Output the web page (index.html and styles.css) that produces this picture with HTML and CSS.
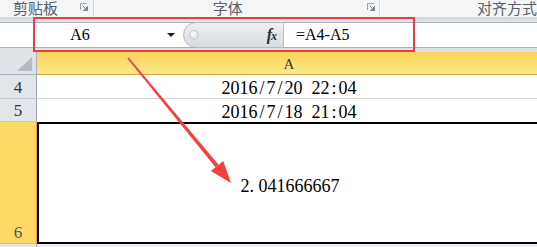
FILE: index.html
```html
<!DOCTYPE html>
<html lang="en">
<head>
    <meta charset="UTF-8">
    <meta name="viewport" content="width=device-width, initial-scale=1.0">
    <title>Worksheet - time difference</title>
    <link rel="stylesheet" href="styles.css">
</head>
<body>
    <div class="window">
        <div class="ribbon" lang="zh-CN">
            <div class="group group-clip">
                <span class="group-label">剪贴板</span>
                <svg class="launcher" viewBox="0 0 8 8"><path d="M0.5 7V0.5H7" fill="none" stroke="#9aa0a7"/><path d="M2.5 2.5L6 6M3.5 7.5H7.5V3.5Z" fill="#7d838a" stroke="#7d838a" stroke-width="1"/></svg>
            </div>
            <div class="group group-font">
                <span class="group-label">字体</span>
                <svg class="launcher" viewBox="0 0 8 8"><path d="M0.5 7V0.5H7" fill="none" stroke="#9aa0a7"/><path d="M2.5 2.5L6 6M3.5 7.5H7.5V3.5Z" fill="#7d838a" stroke="#7d838a" stroke-width="1"/></svg>
            </div>
            <div class="group group-align">
                <span class="group-label">对齐方式</span>
            </div>
        </div>
        <div class="ribbon-edge"></div>

        <div class="formula-bar">
            <div class="name-box">
                <span class="name-text">A6</span>
                <span class="name-arrow"></span>
            </div>
            <div class="fx-pill">
                <span class="pill-knob"></span>
                <span class="fx">f<small>x</small></span>
            </div>
            <div class="formula-input">=A4-A5</div>
        </div>
        <div class="bar-gap"></div>

        <div class="sheet">
            <div class="corner"><span class="corner-tri"></span></div>
            <div class="col-head">A</div>

            <div class="row-head">4</div>
            <div class="cell cell-line">2016<span class="p">/</span>7<span class="p">/</span>20<span class="p">&nbsp;</span>22<span class="p">:</span>04</div>

            <div class="row-head">5</div>
            <div class="cell">2016<span class="p">/</span>7<span class="p">/</span>18<span class="p">&nbsp;</span>21<span class="p">:</span>04</div>

            <div class="row-head row-head-active">6</div>
            <div class="cell cell-active">2<span class="p p-left">.</span>041666667</div>

            <div class="row-head row-head-next"></div>
            <div class="cell-next"></div>
        </div>

        <!-- callout drawn over the sheet -->
        <div class="highlight"></div>
        <svg class="arrow" viewBox="0 0 537 247">
            <polygon points="127.3,58.5 128.7,57.5 218.5,164.8 215.5,167.2" fill="#f2403f"/>
            <polygon points="231,183 210.8,171.1 223.2,160.9" fill="#f2403f"/>
        </svg>
    </div>
</body>
</html>
```

FILE: styles.css
```css
body {
    margin: 0;
    padding: 0;
    font-family: "Liberation Serif", serif;
    background-color: #f3f4f6;
}
.window {
    position: relative;
    width: 537px;
    height: 247px;
    overflow: hidden;
}

/* ribbon group captions */
.ribbon {
    display: flex;
    height: 17px;
    background-color: #f4f5f7;
}
.group {
    display: flex;
    align-items: flex-start;
    box-sizing: border-box;
    border-right: 1px solid #d3d7dc;
    border-left: 1px solid #ffffff;
}
.group-clip {
    width: 94px;
    padding-left: 13px;
    border-left: none;
}
.group-font {
    width: 287px;
    padding-left: 118px;
}
.group-align {
    flex: 1;
    padding-left: 96px;
    border-right: none;
}
.group-label {
    font-family: "Noto Sans CJK SC", sans-serif;
    font-size: 15px;
    line-height: 15px;
    color: #5a6068;
    white-space: nowrap;
}
.launcher {
    width: 8px;
    height: 8px;
    margin-top: 3px;
    margin-left: 22px;
}
.group-font .launcher {
    margin-left: 124px;
}
.ribbon-edge {
    height: 5px;
    background: linear-gradient(#d2d6dc, #e4e7eb);
}

/* formula bar */
.formula-bar {
    display: flex;
    height: 26px;
    box-sizing: border-box;
    border-top: 1px solid #a9b0b9;
    border-bottom: 1px solid #a9b0b9;
    background-color: #ffffff;
}
.name-box {
    width: 183px;
    display: flex;
    align-items: center;
}
.name-text {
    width: 160px;
    text-align: center;
    font-size: 16px;
    color: #000;
}
.name-arrow {
    width: 0;
    height: 0;
    margin-left: 7px;
    border-left: 4px solid transparent;
    border-right: 4px solid transparent;
    border-top: 4px solid #1e1e1e;
}
.fx-pill {
    width: 101px;
    margin: -1px 0;
    box-sizing: border-box;
    display: flex;
    align-items: center;
    justify-content: space-between;
    padding: 0 7px 0 5px;
    border: 1px solid #b5bcc5;
    border-radius: 13px 0 0 13px;
    background: linear-gradient(#eef0f2, #d8dce1);
}
.pill-knob {
    width: 8px;
    height: 8px;
    border-radius: 50%;
    border: 1px solid #c3c8ce;
    background: radial-gradient(circle at 40% 35%, #ffffff, #ccd1d6);
}
.fx {
    font-style: italic;
    font-weight: bold;
    font-size: 16px;
    color: #2e2e2e;
    letter-spacing: -1px;
}
.fx small {
    font-size: 12px;
}
.formula-input {
    flex: 1;
    display: flex;
    align-items: center;
    padding-left: 12px;
    font-size: 16px;
    color: #000;
}
.bar-gap {
    height: 4px;
    background-color: #dfe2e6;
}

/* worksheet */
.sheet {
    display: grid;
    grid-template-columns: 37px 504px;
    grid-template-rows: 23px 24px 23px 122px 10px;
    background-color: #ffffff;
}
.corner {
    display: flex;
    justify-content: flex-end;
    align-items: flex-end;
    padding: 0 4px 3px 0;
    box-sizing: border-box;
    background-color: #dfe3e8;
    border-right: 1px solid #abb2bb;
    border-bottom: 1px solid #abb2bb;
}
.corner-tri {
    width: 15px;
    height: 14px;
    background-color: #b4bac2;
    clip-path: polygon(100% 0, 100% 100%, 0 100%);
}
.col-head {
    display: flex;
    justify-content: center;
    align-items: center;
    padding-top: 2px;
    box-sizing: border-box;
    font-size: 15px;
    color: #3a3a3a;
    background: linear-gradient(#fbd45a, #fde888);
    border-bottom: 1px solid #d1a244;
}
.row-head {
    display: flex;
    justify-content: center;
    align-items: flex-end;
    box-sizing: border-box;
    font-size: 17px;
    line-height: 20px;
    color: #333;
    background-color: #e2e6eb;
    border-right: 1px solid #9ea6b0;
    border-bottom: 1px solid #c6cbd1;
}
.row-head-active {
    background-color: #ffd966;
    border-right-color: #dfa43e;
    border-bottom-color: #e2b65a;
    color: #4f5a50;
}
.row-head-next {
    background-color: #e2e6eb;
    border-bottom: none;
}
.cell {
    display: flex;
    justify-content: center;
    align-items: flex-end;
    box-sizing: border-box;
    font-size: 18px;
    line-height: 20px;
    color: #000;
}
.cell-line {
    border-bottom: 1px solid #d6d6d6;
}
.cell-active {
    align-items: center;
    padding-top: 6px;
    border: 2px solid #000;
    border-right: none;
}
.cell-next {
    background-color: #e9ebee;
}
.p {
    display: inline-block;
    width: 9px;
    text-align: center;
}
.p-left {
    text-align: left;
}

/* red callout */
.highlight {
    position: absolute;
    left: 33px;
    top: 17px;
    width: 382px;
    height: 35px;
    box-sizing: border-box;
    border: 2px solid #e8403f;
}
.arrow {
    position: absolute;
    left: 0;
    top: 0;
    width: 537px;
    height: 247px;
    pointer-events: none;
}
```
